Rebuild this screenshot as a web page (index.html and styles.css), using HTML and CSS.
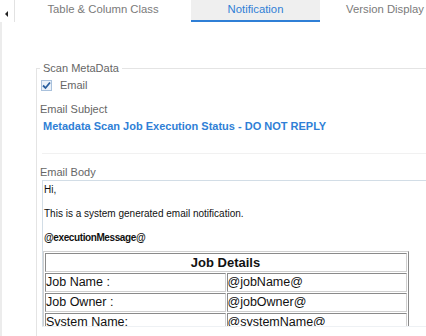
FILE: index.html
```html
<!DOCTYPE html>
<html lang="en">
<head>
  <meta charset="UTF-8" />
  <meta name="viewport" content="width=device-width,initial-scale=1" />
  <title>Notification Settings</title>
  <link rel="stylesheet" href="styles.css">
</head>
<body>

  <!-- TAB BAR -->
  <div class="tabbar">
    <div class="tab-nav"><span class="arrow"></span></div>
    <div class="tab tab-wide">Table &amp; Column Class</div>
    <div class="tab tab-active">Notification</div>
    <div class="tab">Version Display</div>
  </div>

  <!-- NOTIFICATION PANEL -->
  <div class="panel">
    <fieldset class="group">
      <legend>Scan MetaData</legend>

      <label class="check">
        <span class="box">
          <svg width="9" height="9" viewBox="0 0 9 9"><path d="M1 4.5 L3.5 7 L8 1.5" fill="none" stroke="#2a5f9e" stroke-width="1.8"/></svg>
        </span>
        Email
      </label>

      <div class="field-label">Email Subject</div>
      <div class="subject">Metadata Scan Job Execution Status - DO NOT REPLY</div>

      <div class="field-label">Email Body</div>
      <div class="editor">
        <p>Hi,</p>
        <p>This is a system generated email notification.</p>
        <p class="last"><b>@executionMessage@</b></p>
        <table class="details">
          <tr><th colspan="2">Job Details</th></tr>
          <tr><td>Job Name :</td><td>@jobName@</td></tr>
          <tr><td>Job Owner :</td><td>@jobOwner@</td></tr>
          <tr><td>System Name:</td><td>@systemName@</td></tr>
        </table>
      </div>
    </fieldset>
  </div>

</body>
</html>
```

FILE: styles.css
```css
body { margin: 0; font-family: "Liberation Sans", Arial, sans-serif; background: #fff; overflow: hidden; }

/* tabs */
.tabbar { display: flex; height: 22px; white-space: nowrap; overflow: hidden; }
.tab-nav { width: 14px; border-right: 1px solid #e2e2e2; height: 22px; position: relative; flex: none; }
.arrow { position: absolute; left: 5px; top: 11px; border-style: solid; border-width: 3px 3px 3px 0; border-color: transparent #222 transparent transparent; }
.tab { flex: none; width: 130px; height: 20px; line-height: 18px; text-align: center; font-size: 11.3px; color: #7a7a7a; border-bottom: 2px solid transparent; }
.tab-wide { width: 176px; }
.tab-active { width: 129px; background: #efefef; color: #2f7fd6; border-bottom-color: #2f7fd6; }

/* panel */
.panel { height: 314px; border-left: 2px solid #ececec; padding: 40px 0 0 34px; overflow: hidden; box-sizing: border-box; }
.group { margin: 0; padding: 0 0 0 3px; border: 1px solid #e4e4e4; border-right: none; width: 420px; min-height: 300px; }
.group legend { font-size: 11px; color: #666; padding: 0 3px; line-height: 13px; }

.check { display: flex; align-items: center; gap: 8px; font-size: 11px; color: #666; margin: 3px 0 0 1px; height: 14px; }
.box { width: 9px; height: 9px; border: 1px solid #a9c1dc; background: #eaf1f9; display: flex; }

.field-label { font-size: 11px; color: #666; line-height: 13px; }
.check + .field-label { margin-top: 11px; }
.subject { margin: 4px 0 0 2px; padding: 0 0 0 1px; height: 33px; font-size: 11px; font-weight: bold; color: #2f7fd6; border-bottom: 1px solid #f1f1f1; }
.subject + .field-label { margin-top: 12px; }

/* editor */
.editor { margin: 1px 0 0 2px; height: 147px; box-sizing: border-box; border: 1px solid #d2dde6; border-right: none; border-bottom-color: #eef1f4; padding: 2px 0 0 0; overflow: hidden; font-size: 10px; color: #111; }
.editor p { margin: 0 0 11px; padding-left: 1px; line-height: 13px; }
.editor p.last { margin-bottom: 0; }
.editor b { font-size: 10px; letter-spacing: -0.4px; }

.details { margin-top: 7px; width: 366px; border-spacing: 1px; border: 1px solid; border-color: #d0d0d0 #8a8a8a #8a8a8a #d0d0d0; font-size: 12.5px; }
.details th, .details td { border: 1px solid; border-color: #8a8a8a #d0d0d0 #d0d0d0 #8a8a8a; height: 17px; padding: 0 1px 0 0; text-align: left; width: 50%; line-height: 17px; }
.details th { text-align: center; font-size: 13px; }
```
